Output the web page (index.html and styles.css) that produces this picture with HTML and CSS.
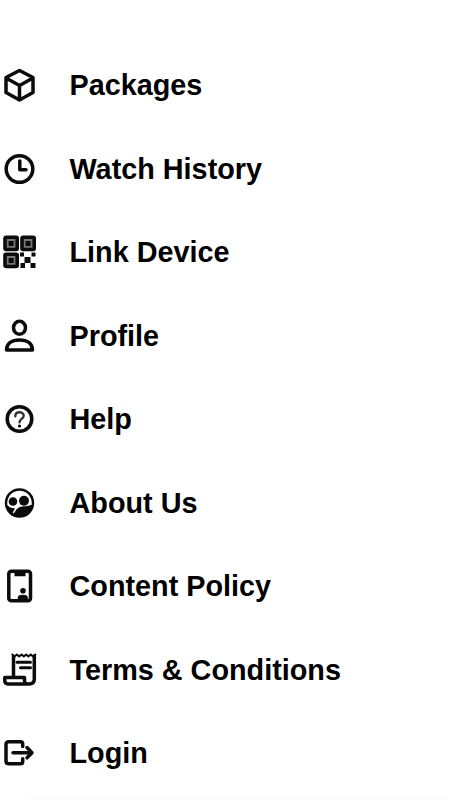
FILE: index.html
```html
<!DOCTYPE html>
<html lang="en">
<head>
<meta charset="utf-8">
<title>Menu</title>
<link rel="stylesheet" href="styles.css">
</head>
<body>
<nav class="menu">
  <a class="item"><svg class="icon" viewBox="0 0 40 40"><path d="M19.5 5.5 33 12.5V27.5L19.5 35 6 27.5V12.5ZM6 13 19.5 20.5 33 13M19.5 20.5V34"/></svg><span>Packages</span></a>
  <a class="item"><svg class="icon" viewBox="0 0 40 40"><circle cx="19.5" cy="20" r="13.3"/><path d="M19.8 12V20.8H26"/></svg><span>Watch History</span></a>
  <a class="item"><svg class="icon" viewBox="0 0 40 40"><g class="qr-frame"><rect x="5" y="5.3" width="12.2" height="12.2" rx="1"/><rect x="22" y="5.3" width="12.2" height="12.2" rx="1"/><rect x="5" y="22.3" width="12.2" height="12.2" rx="1"/></g><path class="solid" d="M8.6 8.9h5v5h-5zM25.6 8.9h5v5h-5zM8.6 25.9h5v5h-5zM20 20.5h4v4h-4zM31.5 20.5h4v4h-4zM24.5 25h6v6H24.5zM20.5 31h4.5v5h-4.5zM30.5 31h5v5h-5z"/></svg><span>Link Device</span></a>
  <a class="item"><svg class="icon" viewBox="0 0 40 40"><ellipse cx="19.5" cy="11.8" rx="6" ry="6.5"/><path d="M6.5 34C6.5 27.5 11.3 24 19.5 24S32.5 27.5 32.5 34Z"/></svg><span>Profile</span></a>
  <a class="item"><svg class="icon" viewBox="0 0 40 40"><circle cx="19.5" cy="20" r="12.3"/><path class="question" d="M15.3 17.2C15.3 12 23.7 12.2 23.7 16.7 23.7 20 19.5 19.7 19.5 23.3"/><circle class="solid" cx="19.5" cy="27" r="1.6"/></svg><span>Help</span></a>
  <a class="item"><svg class="icon" viewBox="0 0 40 40"><circle class="solid" cx="19.5" cy="20" r="14.7"/><path class="cut" d="M7.3 22C6.5 14 12 7.8 19.5 7.8S32.5 14 31.7 21.8Q28 23.6 24 23.2 19.5 23 16.6 26.2L13.8 30.5 12.8 29.6 15 25.2Q10.5 25.5 7.3 22Z"/><circle class="solid" cx="13" cy="18.5" r="4.3"/><circle class="solid" cx="24" cy="17.8" r="5"/></svg><span>About Us</span></a>
  <a class="item"><svg class="icon" viewBox="0 0 40 40"><rect x="8.8" y="5.3" width="21.7" height="29.5" rx="2.5"/><path class="solid" d="M14.5 5h11v5.2h-11zM17.8 33V31Q18.5 28.7 22.8 28.7T27.8 31V33Z"/><circle class="solid" cx="23" cy="24.8" r="2.8"/></svg><span>Content Policy</span></a>
  <a class="item"><svg class="icon" viewBox="0 0 40 40"><path d="M13.5 27V6.5M34.3 6V29Q34.3 34 29 34H9Q4.8 34 4.8 31V27.5H24.5V31Q24.5 34 28 34"/><path class="teeth" d="M12.3 4.5 14.6 6.5 16.9 4.5 19.2 6.5 21.5 4.5 23.8 6.5 26.1 4.5 28.4 6.5 30.7 4.5 33 6.5 35.5 4.5"/><path class="lines" d="M17 12.2H30.5M20.5 17.7H30.5"/></svg><span>Terms &amp; Conditions</span></a>
  <a class="item"><svg class="icon" viewBox="0 0 40 40"><path d="M22.7 13.5V11Q22.7 8.7 20.5 8.7H9Q6 8.7 6 11.5V28Q6 30.8 9 30.8H20.5Q22.7 30.8 22.7 28.5V25.8"/><path d="M13 19.8H31M27 14.5 32 19.8 27 24.8"/></svg><span>Login</span></a>
</nav>
<div class="divider"></div>
</body>
</html>
```

FILE: styles.css
```css
* {
  box-sizing: border-box;
}

body {
  margin: 0;
  height: 800px;
  overflow: hidden;
  background: #fff;
  color: #000;
  font: bold 28.8px/40px "Liberation Sans", Arial, sans-serif;
}

.menu {
  padding-top: 43.3px;
}

.item {
  display: flex;
  align-items: center;
  gap: 29.5px;
  height: 83.5px;
  white-space: nowrap;
}

.icon {
  flex: none;
  width: 40px;
  height: 40px;
  fill: none;
  stroke: #0b0b0b;
  stroke-width: 3.5;
  stroke-linejoin: round;
  stroke-linecap: round;
}

.solid {
  fill: #0b0b0b;
  stroke: none;
}

.cut {
  fill: #fff;
  stroke: none;
}

.qr-frame {
  fill: #777;
  stroke-width: 3.6;
}

.question {
  stroke: #333;
  stroke-width: 2.4;
}

.teeth {
  stroke-width: 2;
}

.lines {
  stroke-width: 3;
}

.divider {
  height: 2px;
  margin: 3.7px 2px 0 28px;
  background: #fcfcfc;
}
```
